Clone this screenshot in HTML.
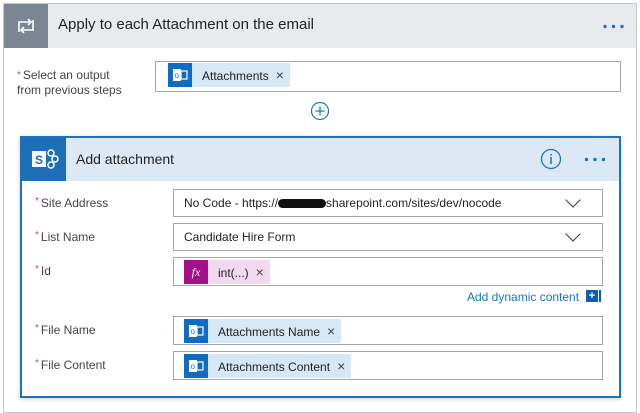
<!DOCTYPE html>
<html><head><style>
*{margin:0;padding:0;box-sizing:border-box}
body{width:640px;height:405px;background:#fff;font-family:"Liberation Sans",sans-serif;position:relative;overflow:hidden;color:#252525}
.a{position:absolute}
.box{position:absolute;border:1px solid #a6a6a6;background:#fff}
.lbl{position:absolute;font-size:12px;color:#444}
.lbl b{color:#e0443e;font-weight:normal;font-size:10px;vertical-align:top;margin-right:2px}
.tok{position:absolute;top:3px;left:10px;height:24px;background:#d6e7f6;font-size:12px;line-height:24px;padding-left:34px;padding-right:6px;color:#222}
.ico{position:absolute;left:0;top:0;width:24px;height:24px;background:#0f6cc0}
.x{margin-left:7px;font-size:14px;color:#444}
.chev{position:absolute;right:24px;top:5px;width:10px;height:10px;border-right:1.3px solid #444;border-bottom:1.3px solid #444;transform:rotate(45deg) scale(1.1,1.1)}
.txt{position:absolute;left:10px;top:6px;font-size:12px;color:#222}
</style></head><body>
<div class="a" style="left:3px;top:3px;width:634px;height:410px;border:1px solid #c8c8c8;background:#fff"></div>
<div class="a" style="left:4px;top:4px;width:632px;height:44px;background:#e8ebee"></div>
<div class="a" style="left:4px;top:4px;width:44px;height:44px;background:#7b8594">
<svg width="44" height="44" viewBox="0 0 44 44"><g fill="none" stroke="#fff" stroke-width="1.6"><path d="M15 28V18h12M24 15l3 3-3 3M29 16v10H17M20 29l-3-3 3-3"/></g></svg></div>
<div class="a" style="left:58px;top:16px;font-size:15px;color:#222">Apply to each Attachment on the email</div>
<svg class="a" style="left:600px;top:22px" width="30" height="10"><circle cx="5" cy="4.5" r="1.7" fill="#1a73c9"/><circle cx="13.5" cy="4.5" r="1.7" fill="#1a73c9"/><circle cx="22" cy="4.5" r="1.7" fill="#1a73c9"/></svg>

<div class="lbl" style="left:17px;top:68px;line-height:15px"><b>*</b>Select an output<br>from previous steps</div>
<div class="box" style="left:155px;top:61px;width:466px;height:31px">
<div class="tok" style="left:12px;top:1px;height:24px">
<div class="ico"><svg width="24" height="24"><rect x="5" y="6" width="8" height="12" fill="#fff"/><text x="6.5" y="15" font-size="8" fill="#0f6cc0" font-family="Liberation Sans">o</text><rect x="13" y="8" width="6" height="8" fill="none" stroke="#fff" stroke-width="1.2"/></svg></div>Attachments<span class="x">×</span></div></div>
<svg class="a" style="left:310px;top:101px" width="20" height="20"><circle cx="10" cy="10" r="8.5" fill="#fff" stroke="#1a73c9" stroke-width="1.2"/><path d="M10 5.5v9M5.5 10h9" stroke="#1a73c9" stroke-width="1.2"/></svg>

<div class="a" style="left:20px;top:136px;width:601px;height:262px;border:2px solid #1f72b8;background:#fff;box-shadow:0 1px 4px rgba(0,0,0,.2)"></div>
<div class="a" style="left:22px;top:138px;width:597px;height:43px;background:#dce9f5"></div>
<div class="a" style="left:22px;top:138px;width:44px;height:43px;background:#1a6fb8">
<svg width="44" height="43"><rect x="10" y="13" width="14" height="16" fill="#fff"/><text x="13" y="26" font-size="12" font-weight="bold" fill="#1a6fb8" font-family="Liberation Sans">S</text><g fill="none" stroke="#fff" stroke-width="1.5"><circle cx="29" cy="15" r="3"/><circle cx="33" cy="21" r="3"/><circle cx="29" cy="27" r="3"/></g></svg></div>
<div class="a" style="left:76px;top:151px;font-size:14px;color:#222">Add attachment</div>
<svg class="a" style="left:540px;top:148px" width="22" height="22"><circle cx="11" cy="11" r="9.5" fill="none" stroke="#1a73c9" stroke-width="1.3"/><rect x="10.3" y="9" width="1.5" height="7" fill="#1a73c9"/><rect x="10.3" y="6" width="1.5" height="1.6" fill="#1a73c9"/></svg>
<svg class="a" style="left:582px;top:155px" width="30" height="10"><circle cx="4.5" cy="4.5" r="1.7" fill="#1a73c9"/><circle cx="13" cy="4.5" r="1.7" fill="#1a73c9"/><circle cx="21.5" cy="4.5" r="1.7" fill="#1a73c9"/></svg>

<div class="lbl" style="left:35px;top:196px"><b>*</b>Site Address</div>
<div class="box" style="left:173px;top:189px;width:430px;height:28px"><div class="txt">No Code - https://<span style="display:inline-block;width:48px;height:9px;background:#111;border-radius:5px;vertical-align:middle"></span>sharepoint.com/sites/dev/nocode</div><div class="chev"></div></div>
<div class="lbl" style="left:35px;top:230px"><b>*</b>List Name</div>
<div class="box" style="left:173px;top:223px;width:430px;height:28px"><div class="txt">Candidate Hire Form</div><div class="chev"></div></div>
<div class="lbl" style="left:35px;top:264px"><b>*</b>Id</div>
<div class="box" style="left:173px;top:257px;width:430px;height:29px">
<div class="tok" style="background:#f2d9ed;top:2px;left:10px">
<div class="ico" style="background:#a4108a;color:#fff;font-family:'Liberation Serif',serif;font-style:italic;text-align:center;font-size:12px">fx</div>int(...)<span class="x">×</span></div></div>
<div class="a" style="left:467px;top:290px;font-size:12px;color:#1a73c9">Add dynamic content</div>
<div class="a" style="left:586px;top:290px;width:12px;height:12px;background:#0f5fae;color:#fff;font-size:11px;line-height:12px;text-align:center;font-weight:bold">+</div>
<div class="a" style="left:599px;top:290px;width:2px;height:12px;background:#0f5fae"></div>

<div class="lbl" style="left:35px;top:323px"><b>*</b>File Name</div>
<div class="box" style="left:173px;top:316px;width:430px;height:29px">
<div class="tok" style="top:2px"><div class="ico"><svg width="24" height="24"><rect x="5" y="6" width="8" height="12" fill="#fff"/><text x="6.5" y="15" font-size="8" fill="#0f6cc0" font-family="Liberation Sans">o</text><rect x="13" y="8" width="6" height="8" fill="none" stroke="#fff" stroke-width="1.2"/></svg></div>Attachments Name<span class="x">×</span></div></div>
<div class="lbl" style="left:35px;top:358px"><b>*</b>File Content</div>
<div class="box" style="left:173px;top:351px;width:430px;height:29px">
<div class="tok" style="top:2px"><div class="ico"><svg width="24" height="24"><rect x="5" y="6" width="8" height="12" fill="#fff"/><text x="6.5" y="15" font-size="8" fill="#0f6cc0" font-family="Liberation Sans">o</text><rect x="13" y="8" width="6" height="8" fill="none" stroke="#fff" stroke-width="1.2"/></svg></div>Attachments Content<span class="x">×</span></div></div>
</body></html>
